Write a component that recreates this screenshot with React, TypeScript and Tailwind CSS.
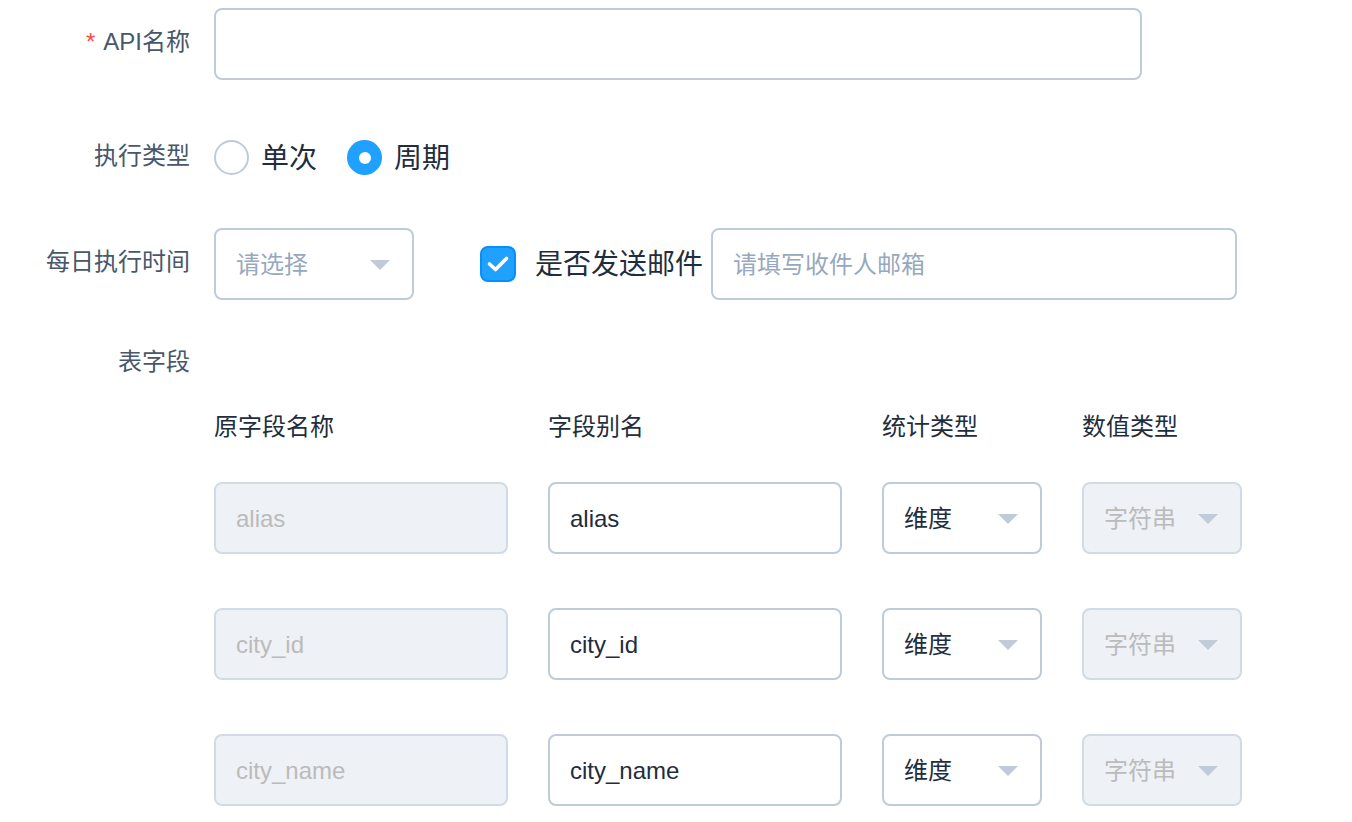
import React from "react";

const FONT = { fontFamily: '"Liberation Sans", "Noto Sans CJK SC", sans-serif' };

const labelCls =
  "w-[214px] shrink-0 pr-6 text-right text-[24px] leading-none text-[#48576a]";

const Arrow = () => (
  <svg width="22" height="12" viewBox="0 0 22 12" className="shrink-0">
    <path d="M1 1 H21 L11 11 Z" fill="#bfcbd9" />
  </svg>
);

interface BoxProps {
  width: string;
  value?: string;
  placeholder?: string;
  disabled?: boolean;
  select?: boolean;
}

const Box = ({ width, value, placeholder, disabled, select }: BoxProps) => (
  <div
    className={`${width} h-[72px] shrink-0 rounded-[8px] border-2 flex items-center justify-between pl-5 pr-[21px] pt-[2px] text-[24px] leading-none ${
      disabled
        ? "bg-[#eef1f6] border-[#d1dbe5] text-[#bbbbbb]"
        : "bg-white border-[#bfcbd9] text-[#1f2d3d]"
    }`}
  >
    {value ? (
      <span>{value}</span>
    ) : (
      <span className="text-[#97a8be]">{placeholder}</span>
    )}
    {select && <Arrow />}
  </div>
);

const fields = ["alias", "city_id", "city_name"];

export default function App() {
  return (
    <div className="w-[1352px] h-[822px] bg-white overflow-hidden pt-2" style={FONT}>
      {/* API名称 */}
      <div className="flex h-[72px]">
        <div className={`${labelCls} pt-[22px]`}>
          <span className="text-[#ff4949] mr-2">*</span>API名称
        </div>
        <div className="w-[928px] h-[72px] rounded-[8px] border-2 border-[#bfcbd9] bg-white" />
      </div>

      {/* 执行类型 */}
      <div className="flex h-[60px] mt-[44px]">
        <div className={`${labelCls} pt-[20px]`}>执行类型</div>
        <div className="flex items-center pt-4 h-[51px]">
          <div className="flex items-center">
            <span className="w-[35px] h-[35px] rounded-full border-2 border-[#bfcbd9] bg-white" />
            <span className="ml-3 mt-[2px] text-[28px] leading-none text-[#1f2d3d]">单次</span>
          </div>
          <div className="flex items-center ml-[30px]">
            <span className="w-[35px] h-[35px] rounded-full bg-[#20a0ff] flex items-center justify-center">
              <span className="w-3 h-3 rounded-full bg-white" />
            </span>
            <span className="ml-3 mt-[2px] text-[28px] leading-none text-[#1f2d3d]">周期</span>
          </div>
        </div>
      </div>

      {/* 每日执行时间 */}
      <div className="flex h-[72px] mt-[44px]">
        <div className={`${labelCls} pt-[22px]`}>每日执行时间</div>
        <Box width="w-[200px]" placeholder="请选择" select />
        <div className="flex items-center ml-[66px]">
          <span className="w-9 h-9 rounded-[8px] bg-[#20a0ff] border-2 border-[#0190fe] flex items-center justify-center">
            <svg width="24" height="18" viewBox="0 0 24 18">
              <path
                d="M3.5 9 L9.5 14.5 L20.5 3.5"
                fill="none"
                stroke="white"
                strokeWidth="3.6"
                strokeLinecap="round"
                strokeLinejoin="round"
              />
            </svg>
          </span>
          <span className="ml-[19px] mt-[2px] text-[28px] leading-none text-[#1f2d3d]">是否发送邮件</span>
        </div>
        <div className="ml-2">
          <Box width="w-[526px]" placeholder="请填写收件人邮箱" />
        </div>
      </div>

      {/* 表字段 */}
      <div className="flex mt-[50px]">
        <div className={labelCls}>表字段</div>
      </div>

      <div className="ml-[214px] mt-[41px]">
        <div className="flex gap-10 text-[24px] leading-none text-[#1f2d3d]">
          <div className="w-[294px]">原字段名称</div>
          <div className="w-[294px]">字段别名</div>
          <div className="w-[160px]">统计类型</div>
          <div className="w-[160px]">数值类型</div>
        </div>
        <div className="flex flex-col gap-[54px] mt-[43px]">
          {fields.map((f) => (
            <div key={f} className="flex gap-10">
              <Box width="w-[294px]" value={f} disabled />
              <Box width="w-[294px]" value={f} />
              <Box width="w-[160px]" value="维度" select />
              <Box width="w-[160px]" value="字符串" disabled select />
            </div>
          ))}
        </div>
      </div>
    </div>
  );
}
